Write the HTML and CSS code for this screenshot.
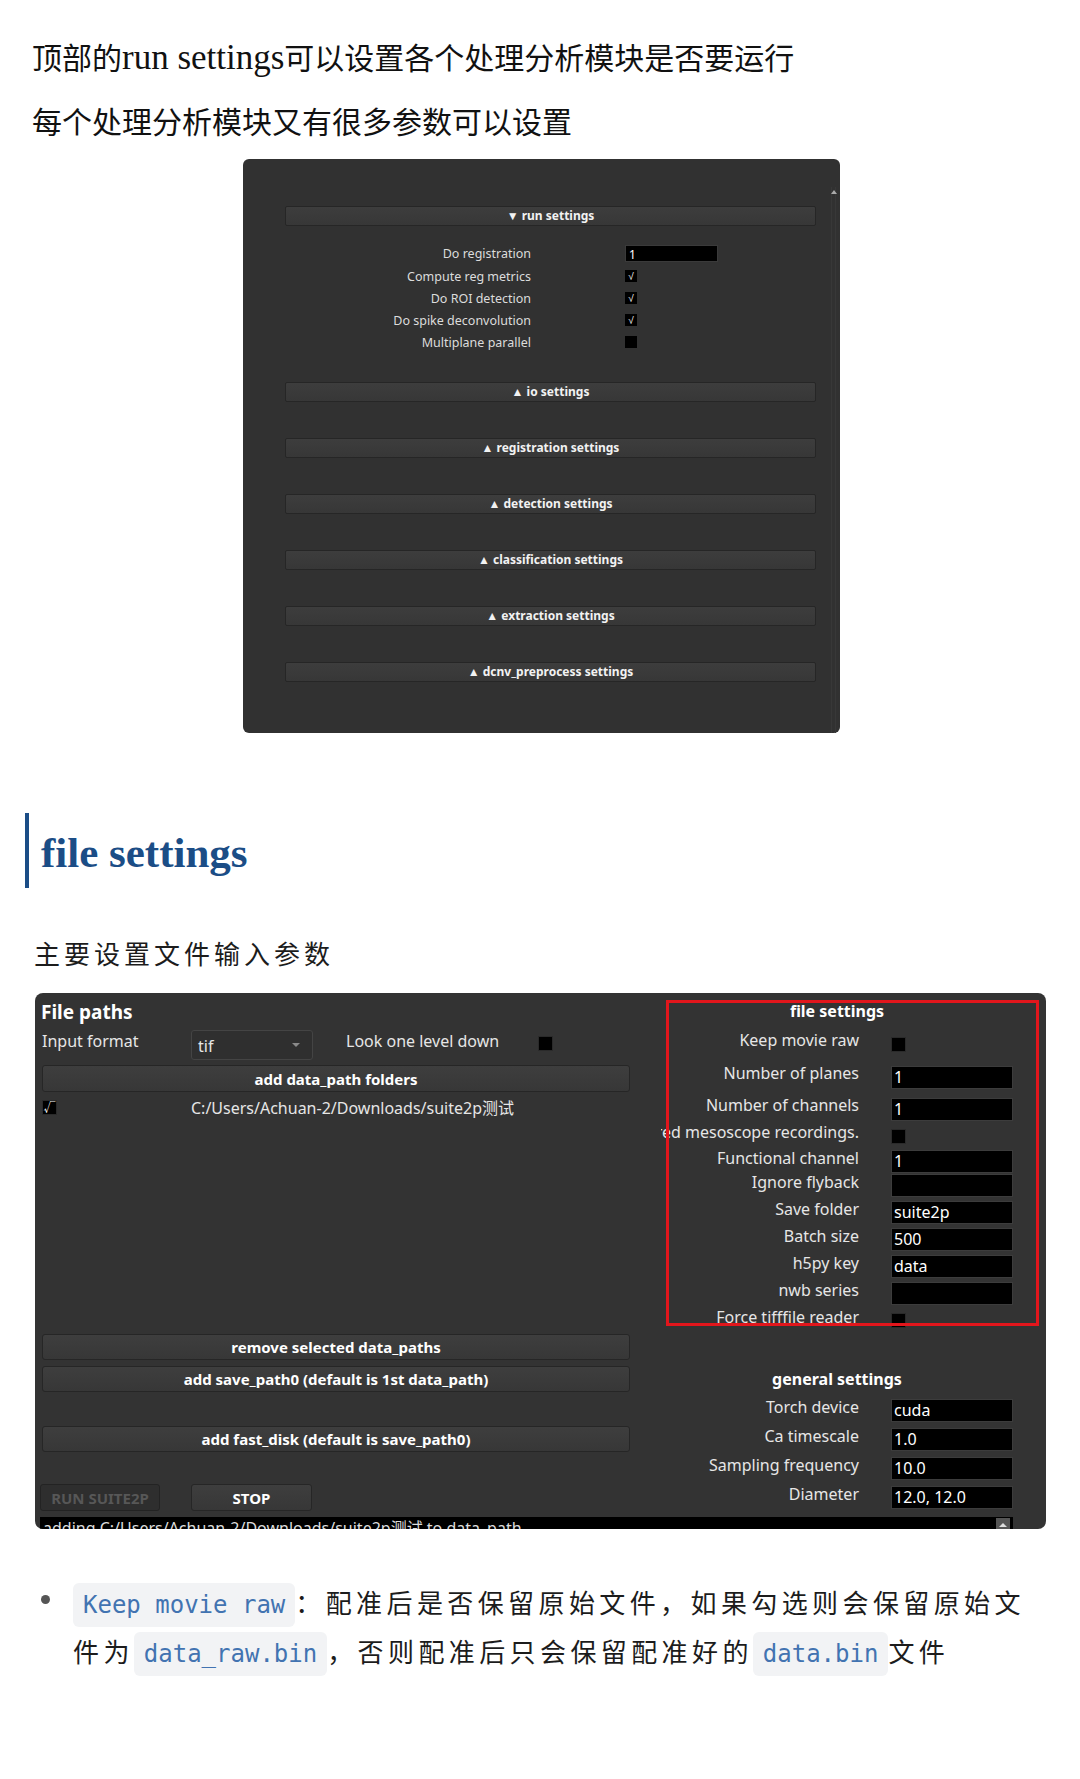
FILE: index.html
```html
<!DOCTYPE html>
<html lang="zh-CN">
<head>
    <meta charset="UTF-8">
    <meta name="viewport" content="width=device-width, initial-scale=1.0">
    <title>suite2p 参数设置</title>
    <link rel="stylesheet" href="styles.css">
</head>
<body>
    <main class="article">
        <p class="lead">顶部的<span class="latin">run settings</span>可以设置各个处理分析模块是否要运行</p>
        <p class="lead lead-second">每个处理分析模块又有很多参数可以设置</p>

        <!-- run settings dialog -->
        <div class="run-panel">
            <div class="scroll-track"><span class="scroll-arrow"></span></div>
            <div class="section-bar">▼ run settings</div>
            <div class="run-rows">
                <div class="run-row first">
                    <span class="run-label">Do registration</span>
                    <span class="run-input">1</span>
                </div>
                <div class="run-row">
                    <span class="run-label">Compute reg metrics</span>
                    <span class="run-check">√</span>
                </div>
                <div class="run-row">
                    <span class="run-label">Do ROI detection</span>
                    <span class="run-check">√</span>
                </div>
                <div class="run-row">
                    <span class="run-label">Do spike deconvolution</span>
                    <span class="run-check">√</span>
                </div>
                <div class="run-row">
                    <span class="run-label">Multiplane parallel</span>
                    <span class="run-check"></span>
                </div>
            </div>
            <div class="section-bar io-bar">▲ io settings</div>
            <div class="section-bar">▲ registration settings</div>
            <div class="section-bar">▲ detection settings</div>
            <div class="section-bar">▲ classification settings</div>
            <div class="section-bar">▲ extraction settings</div>
            <div class="section-bar">▲ dcnv_preprocess settings</div>
        </div>

        <h2 class="section-heading">file settings</h2>
        <p class="note">主要设置文件输入参数</p>

        <!-- main window -->
        <div class="main-window">
            <div class="window-body">
                <div class="left-col">
                    <div class="group-title">File paths</div>
                    <div class="format-row">
                        <span class="plain-label format-label">Input format</span>
                        <div class="combo"><span>tif</span><span class="combo-arrow"></span></div>
                        <span class="plain-label look-label">Look one level down</span>
                        <span class="checkbox look-check"></span>
                    </div>
                    <button class="qbtn">add data_path folders</button>
                    <div class="path-list">
                        <div class="path-item">
                            <span class="checkbox">√</span>
                            <span class="path-text">C:/Users/Achuan-2/Downloads/suite2p测试</span>
                        </div>
                    </div>
                    <button class="qbtn">remove selected data_paths</button>
                    <button class="qbtn save-btn">add save_path0 (default is 1st data_path)</button>
                    <button class="qbtn fast-btn">add fast_disk (default is save_path0)</button>
                    <div class="run-buttons">
                        <button class="qbtn run-btn" disabled>RUN SUITE2P</button>
                        <button class="qbtn stop-btn">STOP</button>
                    </div>
                </div>

                <div class="right-col">
                    <div class="ops-scroll">
                        <div class="ops-title">file settings</div>
                        <div class="ops-row h32">
                            <span class="ops-label"><span>Keep movie raw</span></span>
                            <span class="checkbox"></span>
                        </div>
                        <div class="ops-row h34">
                            <span class="ops-label"><span>Number of planes</span></span>
                            <span class="ops-input">1</span>
                        </div>
                        <div class="ops-row h30">
                            <span class="ops-label"><span>Number of channels</span></span>
                            <span class="ops-input">1</span>
                        </div>
                        <div class="ops-row h24">
                            <span class="ops-label"><span>Use for multiplane acquired mesoscope recordings.</span></span>
                            <span class="checkbox"></span>
                        </div>
                        <div class="ops-row h24">
                            <span class="ops-label"><span>Functional channel</span></span>
                            <span class="ops-input">1</span>
                        </div>
                        <div class="ops-row">
                            <span class="ops-label"><span>Ignore flyback</span></span>
                            <span class="ops-input"></span>
                        </div>
                        <div class="ops-row">
                            <span class="ops-label"><span>Save folder</span></span>
                            <span class="ops-input">suite2p</span>
                        </div>
                        <div class="ops-row">
                            <span class="ops-label"><span>Batch size</span></span>
                            <span class="ops-input">500</span>
                        </div>
                        <div class="ops-row">
                            <span class="ops-label"><span>h5py key</span></span>
                            <span class="ops-input">data</span>
                        </div>
                        <div class="ops-row">
                            <span class="ops-label"><span>nwb series</span></span>
                            <span class="ops-input"></span>
                        </div>
                        <div class="ops-row">
                            <span class="ops-label"><span>Force tifffile reader</span></span>
                            <span class="checkbox"></span>
                        </div>
                    </div>

                    <div class="general">
                        <div class="ops-title general-title">general settings</div>
                        <div class="ops-row gen-row">
                            <span class="ops-label"><span>Torch device</span></span>
                            <span class="ops-input">cuda</span>
                        </div>
                        <div class="ops-row gen-row">
                            <span class="ops-label"><span>Ca timescale</span></span>
                            <span class="ops-input">1.0</span>
                        </div>
                        <div class="ops-row gen-row">
                            <span class="ops-label"><span>Sampling frequency</span></span>
                            <span class="ops-input">10.0</span>
                        </div>
                        <div class="ops-row gen-row">
                            <span class="ops-label"><span>Diameter</span></span>
                            <span class="ops-input">12.0, 12.0</span>
                        </div>
                    </div>
                </div>
            </div>
            <div class="log">
                adding C:/Users/Achuan-2/Downloads/suite2p测试 to data_path
                <span class="log-arrow"></span>
            </div>
        </div>

        <ul class="notes">
            <li><code>Keep movie raw</code>：配准后是否保留原始文件，如果勾选则会保留原始文件为<code>data_raw.bin</code>，否则配准后只会保留配准好的<code>data.bin</code>文件</li>
        </ul>
    </main>
</body>
</html>
```

FILE: styles.css
```css
body {
    margin: 0;
    padding: 0;
    background: #fff;
    color: #1c1c1c;
    font-family: "Noto Sans CJK SC", sans-serif;
}

.article {
    padding-top: 36px;
    padding-bottom: 60px;
}

/* text blocks */

.lead {
    margin: 0 0 0 32px;
    font-size: 30px;
    line-height: 40px;
    color: #111;
}

.lead .latin {
    font-family: "Liberation Serif", serif;
    font-size: 35px;
}

.lead-second {
    margin-top: 22px;
}

.section-heading {
    margin: 80px 0 0 25px;
    height: 75px;
    border-left: 4px solid #1b4d86;
    padding-left: 12px;
    font-family: "Liberation Serif", serif;
    font-size: 43px;
    line-height: 79px;
    color: #1b4d86;
    box-sizing: border-box;
}

.note {
    margin: 40px 0 0 34px;
    font-size: 26px;
    line-height: 49px;
    letter-spacing: 4px;
}

.notes {
    margin: 48px 0 0;
    padding: 0 0 0 73px;
    width: 967px;
    list-style: none;
}

.notes li {
    position: relative;
    font-size: 26px;
    line-height: 49px;
    letter-spacing: 4.4px;
}

.notes li::before {
    content: "";
    position: absolute;
    left: -32px;
    top: 18px;
    width: 9px;
    height: 9px;
    border-radius: 50%;
    background: #555;
}

.notes code {
    font-family: "DejaVu Sans Mono", monospace;
    font-size: 24px;
    line-height: 1;
    letter-spacing: 0;
    color: #4273b1;
    background: #f2f3f5;
    border-radius: 6px;
    padding: 8px 10px;
}

/* run settings dialog */

.run-panel {
    position: relative;
    width: 597px;
    height: 574px;
    margin: 19px 0 0 243px;
    padding-top: 47px;
    box-sizing: border-box;
    background: #313131;
    border-radius: 6px;
    font-family: "Noto Sans", sans-serif;
    color: #dcdcdc;
}

.scroll-track {
    position: absolute;
    right: 4px;
    top: 28px;
    bottom: 0;
    width: 3px;
    border-left: 1px solid #383838;
    border-right: 1px solid #383838;
}

.scroll-arrow {
    position: absolute;
    top: 3px;
    left: -1px;
    border-left: 3px solid transparent;
    border-right: 3px solid transparent;
    border-bottom: 4px solid #aaa;
}

.section-bar {
    margin-left: 42px;
    width: 531px;
    height: 20px;
    box-sizing: border-box;
    background: linear-gradient(#3d3d3d, #373737);
    border: 1px solid #262626;
    border-radius: 2px;
    text-align: center;
    font-size: 12px;
    font-weight: 700;
    line-height: 18px;
    color: #f2f2f2;
}

.section-bar + .section-bar {
    margin-top: 36px;
}

.io-bar {
    margin-top: 29px;
}

.run-rows {
    margin-top: 16px;
}

.run-row {
    display: flex;
    align-items: center;
    height: 22px;
}

.run-row.first {
    height: 23px;
}

.run-label {
    width: 288px;
    text-align: right;
    font-size: 12.5px;
}

.run-input {
    margin-left: 94px;
    width: 93px;
    height: 17px;
    box-sizing: border-box;
    padding-left: 3px;
    background: #000;
    border: 1px solid #3a3a3a;
    color: #fff;
    font-size: 12px;
    line-height: 18px;
}

.run-check {
    margin-left: 94px;
    width: 12px;
    height: 12px;
    background: #000;
    color: #fff;
    font-size: 10px;
    line-height: 12px;
    text-align: center;
}

/* suite2p main window */

.main-window {
    width: 1011px;
    height: 536px;
    margin: 16px 0 0 35px;
    padding-top: 7px;
    box-sizing: border-box;
    background: #333;
    border-radius: 8px;
    overflow: hidden;
    font-family: "Noto Sans", "Noto Sans CJK SC", sans-serif;
    color: #e6e6e6;
}

.window-body {
    display: flex;
}

.left-col {
    display: flex;
    flex-direction: column;
    margin-left: 7px;
    width: 588px;
}

.group-title {
    height: 24px;
    font-size: 19px;
    font-weight: 700;
    line-height: 24px;
    color: #fff;
    margin-left: -1px;
}

.format-row {
    display: flex;
    align-items: flex-start;
    height: 30px;
    margin-top: 6px;
}

.plain-label {
    font-size: 16px;
    line-height: 22px;
}

.format-label {
    width: 149px;
}

.combo {
    position: relative;
    display: flex;
    align-items: flex-end;
    width: 122px;
    height: 30px;
    box-sizing: border-box;
    padding: 0 0 2px 6px;
    background: #2f2f2f;
    border: 1px solid #444;
    border-radius: 3px;
    font-size: 16px;
    line-height: 22px;
}

.combo-arrow {
    position: absolute;
    right: 12px;
    top: 12px;
    border-left: 4px solid transparent;
    border-right: 4px solid transparent;
    border-top: 4px solid #8a8a8a;
}

.look-label {
    width: 192px;
    margin-left: 33px;
}

.checkbox {
    display: block;
    width: 15px;
    height: 15px;
    box-sizing: border-box;
    background: #000;
    border: 1px solid #2a2a2a;
    color: #fff;
    font-size: 12px;
    line-height: 13px;
    text-align: center;
}

.look-check {
    margin-top: 6px;
}

.qbtn {
    display: block;
    width: 100%;
    height: 27px;
    margin: 5px 0 0;
    padding: 0;
    box-sizing: border-box;
    background: linear-gradient(#3e3e3e, #373737);
    border: 1px solid #262626;
    border-radius: 3px;
    font-family: inherit;
    font-size: 15px;
    font-weight: 700;
    color: #fff;
}

.path-list {
    height: 242px;
}

.path-item {
    display: flex;
    align-items: center;
    height: 20px;
    margin-top: 5px;
}

.path-text {
    margin-left: 134px;
    font-size: 16px;
}

.path-list + .qbtn {
    margin-top: 0;
    height: 26px;
}

.save-btn {
    margin-top: 6px;
    height: 26px;
}

.fast-btn {
    margin-top: 34px;
    height: 26px;
}

.run-buttons {
    display: flex;
    margin-top: 32px;
    height: 27px;
}

.run-buttons .qbtn {
    margin: 0;
    height: 27px;
}

.run-btn {
    width: 120px;
    margin-left: -2px !important;
    background: #2e2e2e;
    border-color: #232323;
    color: #575757;
}

.stop-btn {
    width: 121px;
    margin-left: 31px !important;
}

.right-col {
    margin-left: 31px;
    width: 381px;
}

.ops-scroll {
    position: relative;
    height: 328px;
    overflow: hidden;
}

/* highlight frame round the file settings block */
.ops-scroll::after {
    content: "";
    position: absolute;
    top: 0;
    left: 5px;
    right: 3px;
    bottom: 2px;
    border: 3px solid #e2161c;
}

.ops-title {
    width: 352px;
    height: 26px;
    padding-bottom: 4px;
    box-sizing: border-box;
    text-align: center;
    font-size: 16px;
    font-weight: 700;
    line-height: 22px;
    color: #fff;
}

.ops-row {
    display: grid;
    grid-template-columns: 198px 122px;
    column-gap: 32px;
    align-items: center;
    height: 27px;
}

.ops-row.h24 { height: 24px; }
.ops-row.h30 { height: 30px; }
.ops-row.h32 { height: 32px; }
.ops-row.h34 { height: 34px; }

.ops-label {
    display: flex;
    justify-content: flex-end;
    white-space: nowrap;
    padding-bottom: 4px;
    font-size: 16px;
    line-height: 20px;
}

.ops-input {
    display: flex;
    align-items: flex-end;
    height: 23px;
    margin-top: 4px;
    box-sizing: border-box;
    padding: 0 0 0 2px;
    background: #000;
    border: 1px solid #3c3c3c;
    color: #fff;
    font-size: 16px;
    line-height: 21px;
}

.ops-row .checkbox {
    margin-top: 4px;
}

.general {
    margin-top: 37px;
}

.general-title {
    height: 29px;
    padding-bottom: 0;
    line-height: 29px;
}

.gen-row {
    height: 29px;
}

.log {
    position: relative;
    width: 973px;
    height: 40px;
    margin: 6px 0 0 5px;
    padding-left: 3px;
    box-sizing: border-box;
    background: #000;
    color: #ddd;
    font-size: 16px;
    line-height: 22px;
    white-space: nowrap;
}

.log-arrow {
    position: absolute;
    right: 3px;
    top: 1px;
    width: 14px;
    height: 14px;
    background: #555;
}

.log-arrow::after {
    content: "";
    position: absolute;
    left: 3px;
    top: 5px;
    border-left: 4px solid transparent;
    border-right: 4px solid transparent;
    border-bottom: 4px solid #ddd;
}
```
